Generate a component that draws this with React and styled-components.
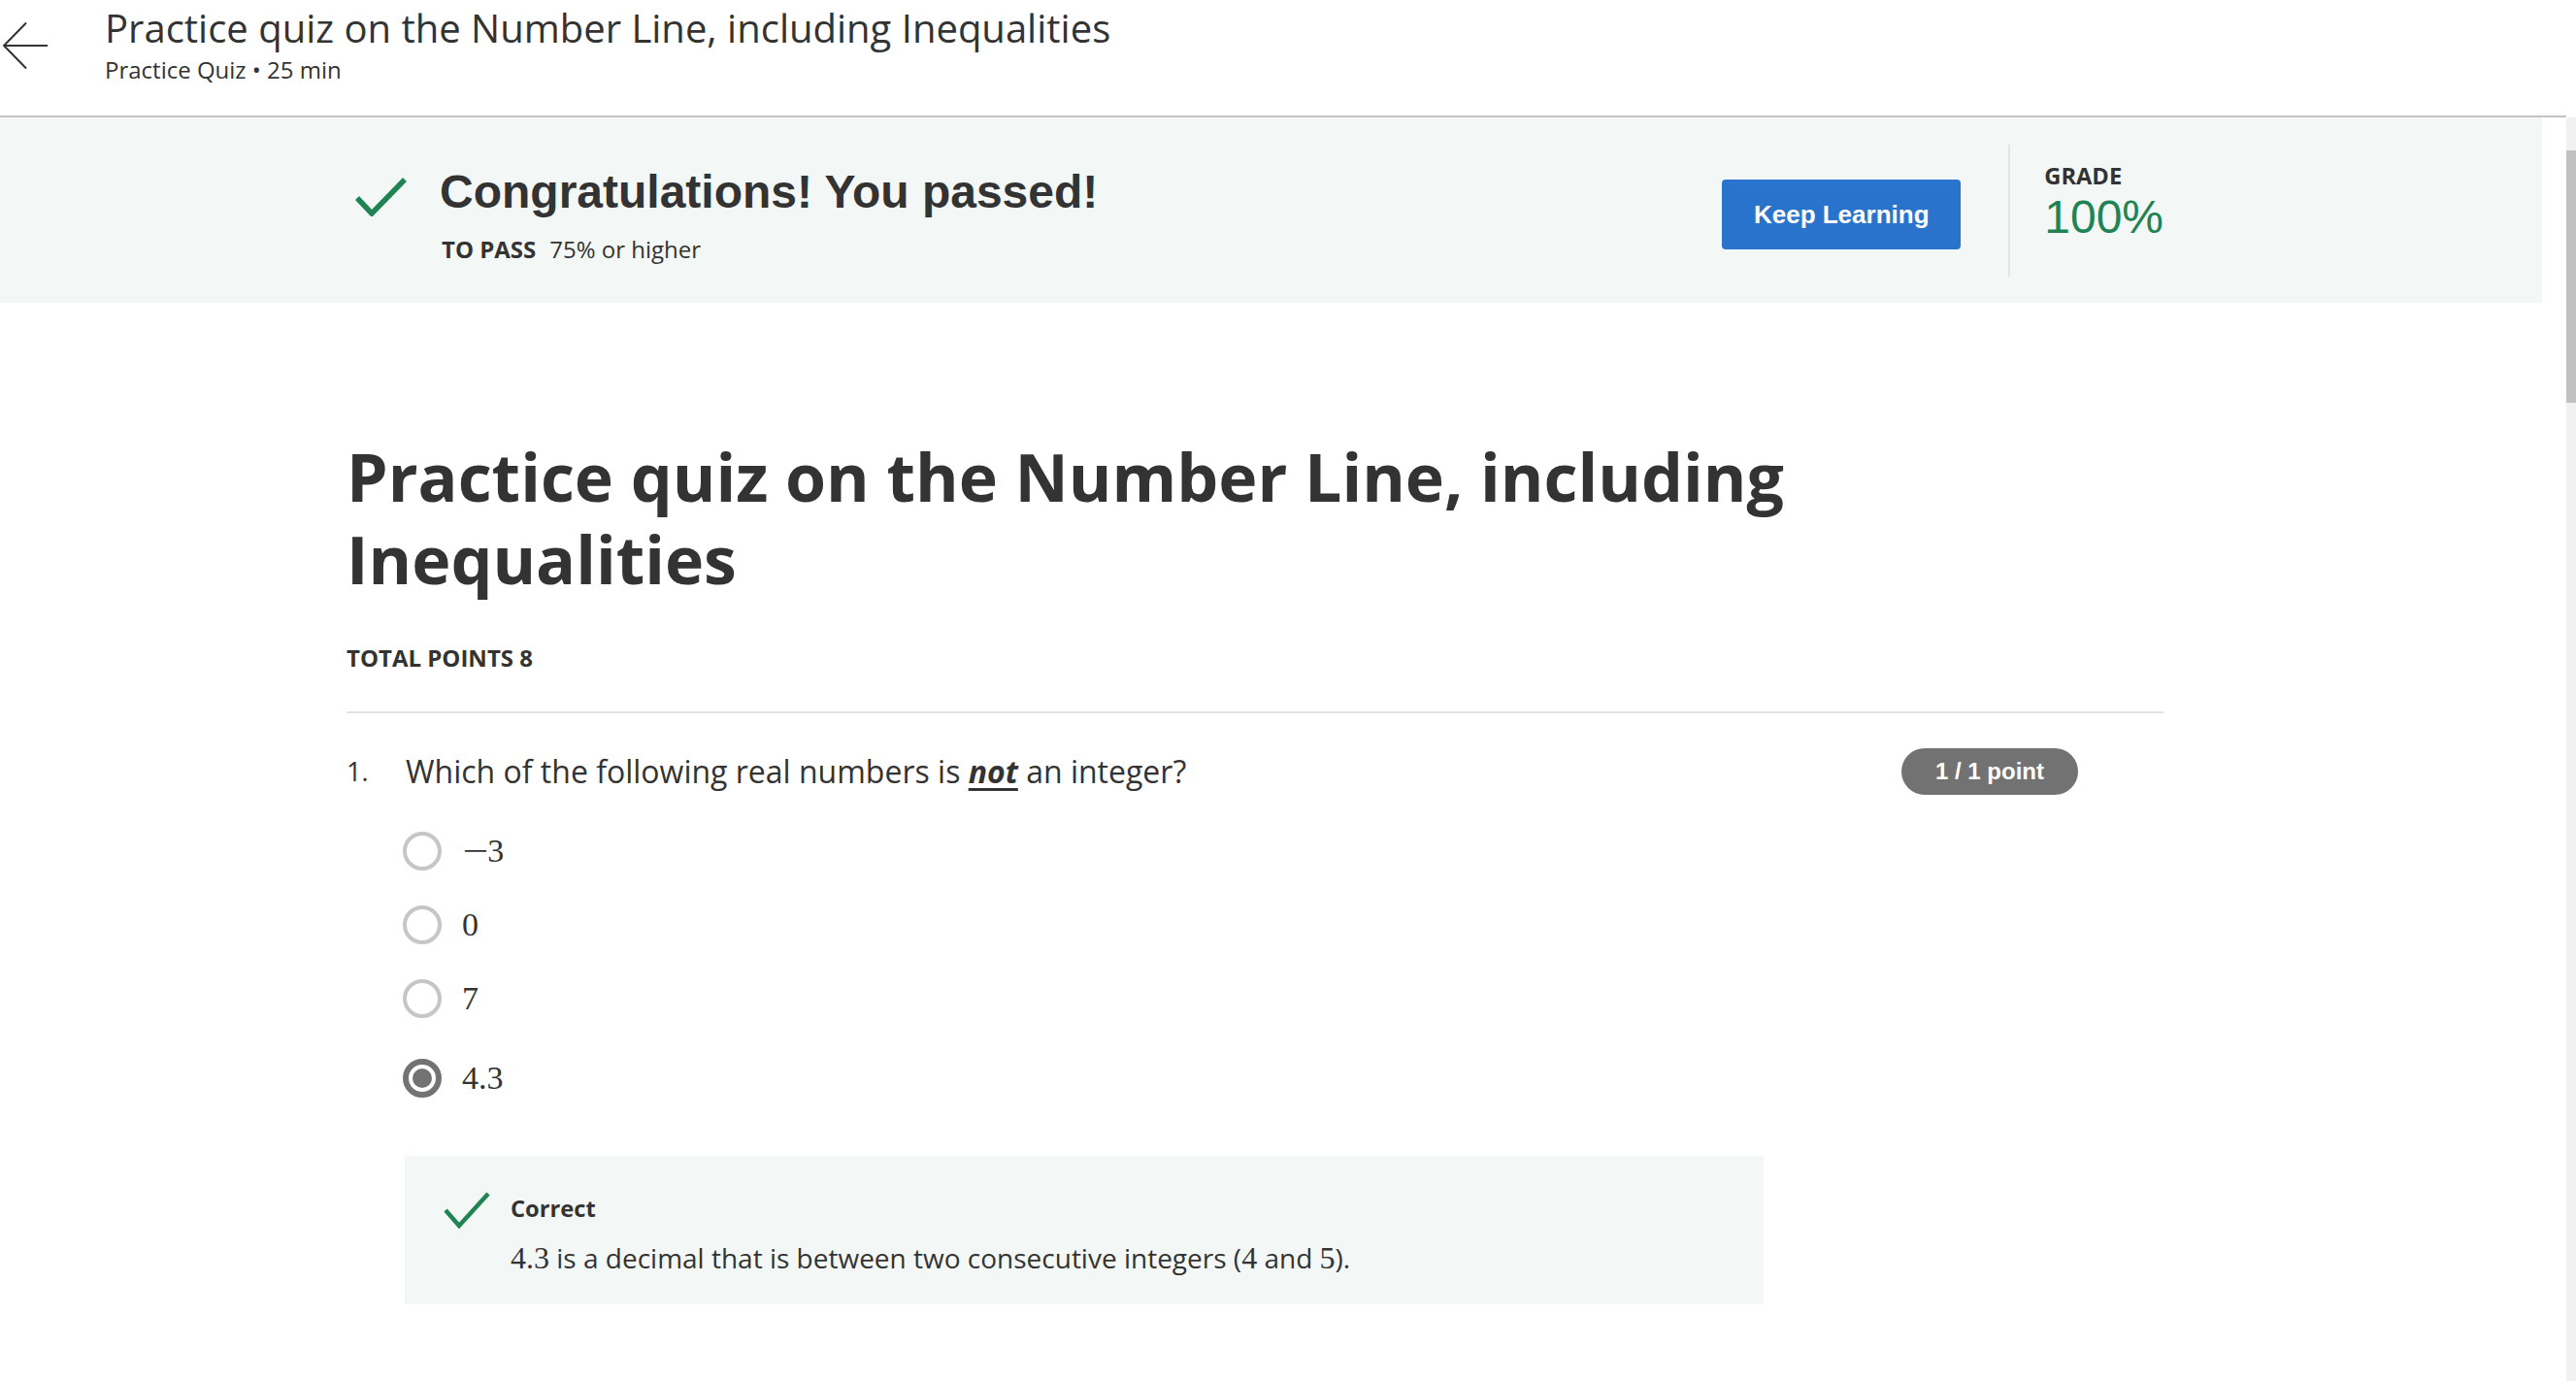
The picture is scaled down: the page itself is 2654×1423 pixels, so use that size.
import React from 'react';
import styled, { createGlobalStyle } from 'styled-components';

const GlobalStyle = createGlobalStyle`
  * { box-sizing: border-box; }
  html, body { margin: 0; padding: 0; height: 100%; overflow: hidden; background: #ffffff; }
  body { font-family: "Open Sans", "Liberation Sans", Arial, sans-serif; color: #333333; }
  #root { height: 100%; }
`;

const Page = styled.div`
  height: 100vh;
  display: flex;
  flex-direction: column;
`;

const TopBar = styled.header`
  flex: none;
  height: 121px;
  margin-right: 10px;
  border-bottom: 2px solid #c4c4c4;
  display: flex;
  align-items: flex-start;
  padding-top: 5px;
  background: #ffffff;
`;

const BackButton = styled.button`
  flex: none;
  width: 108px;
  height: 90px;
  border: 0;
  background: none;
  padding: 17px 0 0 2px;
  display: flex;
  align-items: flex-start;
  cursor: pointer;
`;

const TitleBlock = styled.div`
  display: flex;
  flex-direction: column;
`;

const TopTitle = styled.h1`
  margin: 0;
  font-size: 40px;
  line-height: 48px;
  font-weight: 400;
  color: #333333;
`;

const TopSub = styled.div`
  margin-top: 4px;
  font-size: 24px;
  line-height: 30px;
  color: #333333;
`;

const Body = styled.div`
  flex: 1;
  min-height: 0;
  display: flex;
`;

const Scroller = styled.main`
  flex: 1;
  overflow: hidden;
`;

const ScrollRail = styled.div`
  flex: none;
  width: 10px;
  background: #f1f1f1;
  display: flex;
  flex-direction: column;
`;

const ScrollThumb = styled.div`
  margin-top: 34px;
  height: 260px;
  background: #c1c1c1;
`;

const Banner = styled.section`
  margin-right: 25px;
  height: 191px;
  background: #f3f8f7;
  display: flex;
`;

const Column = styled.div`
  width: 1872px;
  margin-left: 357px;
`;

const BannerRow = styled(Column)`
  display: flex;
  align-items: flex-start;
`;

const PassGroup = styled.div`
  flex: 1;
  margin-top: 48px;
  display: flex;
  align-items: flex-start;
`;

const PassIcon = styled.svg`
  flex: none;
  margin: 14px 0 0 9px;
`;

const PassText = styled.div`
  margin-left: 34px;
  display: flex;
  flex-direction: column;
`;

const Congrats = styled.h2`
  margin: 0;
  font-family: "Liberation Sans", Arial, sans-serif;
  font-size: 48px;
  line-height: 57.6px;
  font-weight: 700;
  color: #333333;
`;

const PassLine = styled.div`
  margin-top: 13px;
  margin-left: 2px;
  font-size: 24px;
  line-height: 33px;
  color: #333333;
`;

const Label = styled.strong`
  font-weight: 700;
  margin-right: 14px;
`;

const KeepButton = styled.button`
  flex: none;
  margin-top: 64px;
  width: 246px;
  height: 72px;
  border: 0;
  border-radius: 4px;
  background: #2a73cc;
  color: #ffffff;
  font-family: "Liberation Sans", Arial, sans-serif;
  font-size: 26px;
  font-weight: 700;
  cursor: pointer;
`;

const VDivider = styled.div`
  flex: none;
  width: 2px;
  height: 136px;
  margin: 28px 35px 0 49px;
  background: #e2e5e4;
`;

const GradeBlock = styled.div`
  flex: none;
  margin-top: 45px;
  display: flex;
  flex-direction: column;
`;

const GradeLabel = styled.div`
  font-size: 23.7px;
  line-height: 30px;
  font-weight: 700;
  color: #333333;
`;

const GradeValue = styled.div`
  font-family: "Liberation Sans", Arial, sans-serif;
  font-size: 48px;
  line-height: 55px;
  color: #1f8354;
`;

const Content = styled(Column)`
  padding-top: 136px;
`;

const QuizTitle = styled.h1`
  margin: 0;
  font-size: 68px;
  line-height: 85px;
  font-weight: 700;
  color: #333333;
  max-width: 1600px;
`;

const TotalPoints = styled.div`
  margin-top: 45px;
  font-size: 24px;
  line-height: 30px;
  font-weight: 700;
  color: #333333;
`;

const Rule = styled.hr`
  margin: 40px 0 0 0;
  border: 0;
  height: 2px;
  background: #e1e1e1;
`;

const Question = styled.div`
  margin-top: 39px;
`;

const QuestionHead = styled.div`
  display: flex;
  align-items: flex-start;
`;

const QNumber = styled.div`
  flex: none;
  width: 61px;
  font-size: 27px;
  line-height: 42px;
  color: #333333;
`;

const QText = styled.div`
  flex: 1;
  font-size: 32px;
  line-height: 42px;
  color: #333333;
`;

const Emph = styled.em`
  font-weight: 700;
  text-decoration: underline;
  text-decoration-thickness: 3px;
  text-underline-offset: 5px;
`;

const PointBadge = styled.div`
  flex: none;
  margin: -3px 88px 0 0;
  height: 48px;
  padding: 0 35px;
  border-radius: 24px;
  background: #727272;
  color: #ffffff;
  font-family: "Liberation Sans", Arial, sans-serif;
  font-size: 24px;
  font-weight: 700;
  display: flex;
  align-items: center;
`;

const Options = styled.div`
  margin-top: 20px;
  padding-left: 58px;
  display: flex;
  flex-direction: column;
`;

const Option = styled.label`
  height: 76px;
  margin-top: ${p => (p.$checked ? '6px' : '0')};
  display: flex;
  align-items: center;
  gap: 21px;
  cursor: pointer;
`;

const Radio = styled.span`
  flex: none;
  width: 40px;
  height: 40px;
  border-radius: 50%;
  border: ${p => (p.$checked ? '6px solid #737373' : '4px solid #c6c6c6')};
  display: flex;
  align-items: center;
  justify-content: center;
  &::after {
    content: '';
    display: ${p => (p.$checked ? 'block' : 'none')};
    width: 20px;
    height: 20px;
    border-radius: 50%;
    background: #737373;
  }
`;

const MathText = styled.span`
  font-family: "Liberation Serif", "Times New Roman", serif;
  font-size: ${p => p.$size || 34}px;
  color: #333333;
`;

const Minus = styled.span`
  display: inline-block;
  margin: 0 3px 0 4px;
  transform: scaleX(1.4);
`;

const Feedback = styled.div`
  margin: 42px 0 0 60px;
  width: 1400px;
  padding: 39px 40px 27px 40px;
  background: #f3f8f7;
  display: flex;
  align-items: flex-start;
`;

const FeedbackIcon = styled.svg`
  flex: none;
  margin-top: -2px;
`;

const FeedbackBody = styled.div`
  margin-left: 21px;
  display: flex;
  flex-direction: column;
`;

const FeedbackTitle = styled.div`
  font-size: 23.7px;
  line-height: 30px;
  font-weight: 700;
  color: #333333;
`;

const FeedbackText = styled.div`
  margin-top: 15px;
  font-size: 28px;
  line-height: 42px;
  color: #333333;
`;

const options = [
  { id: 'a', value: '3', negative: true },
  { id: 'b', value: '0' },
  { id: 'c', value: '7' },
  { id: 'd', value: '4.3', checked: true },
];

export default function App() {
  return (
    <>
      <GlobalStyle />
      <Page>
        <TopBar>
          <BackButton aria-label="Back">
            <svg width="48" height="50" viewBox="0 0 48 50" fill="none" stroke="#333" strokeWidth="2">
              <path d="M47 25 H2" />
              <path d="M25 1.5 L2 25 L25 48.5" />
            </svg>
          </BackButton>
          <TitleBlock>
            <TopTitle>Practice quiz on the Number Line, including Inequalities</TopTitle>
            <TopSub>Practice Quiz • 25 min</TopSub>
          </TitleBlock>
        </TopBar>
        <Body>
          <Scroller>
            <Banner>
              <BannerRow>
                <PassGroup>
                  <PassIcon width="53" height="40" viewBox="0 0 53 40" fill="none" stroke="#1f8354" strokeWidth="5.5">
                    <path d="M2 21 L17 37 L51 2" />
                  </PassIcon>
                  <PassText>
                    <Congrats>Congratulations! You passed!</Congrats>
                    <PassLine>
                      <Label>TO PASS</Label>75% or higher
                    </PassLine>
                  </PassText>
                </PassGroup>
                <KeepButton>Keep Learning</KeepButton>
                <VDivider />
                <GradeBlock>
                  <GradeLabel>GRADE</GradeLabel>
                  <GradeValue>100%</GradeValue>
                </GradeBlock>
              </BannerRow>
            </Banner>
            <Content>
              <QuizTitle>Practice quiz on the Number Line, including Inequalities</QuizTitle>
              <TotalPoints>TOTAL POINTS 8</TotalPoints>
              <Rule />
              <Question>
                <QuestionHead>
                  <QNumber>1.</QNumber>
                  <QText>
                    Which of the following real numbers is <Emph>not</Emph> an integer?
                  </QText>
                  <PointBadge>1 / 1 point</PointBadge>
                </QuestionHead>
                <Options>
                  {options.map(o => (
                    <Option key={o.id} $checked={o.checked}>
                      <Radio $checked={o.checked} />
                      <MathText>
                        {o.negative && <Minus>{'\u2212'}</Minus>}
                        {o.value}
                      </MathText>
                    </Option>
                  ))}
                </Options>
                <Feedback>
                  <FeedbackIcon width="48" height="38" viewBox="0 0 48 38" fill="none" stroke="#1f8354" strokeWidth="4.5">
                    <path d="M2 19 L16 35 L46 2" />
                  </FeedbackIcon>
                  <FeedbackBody>
                    <FeedbackTitle>Correct</FeedbackTitle>
                    <FeedbackText>
                      <MathText $size={32}>4.3</MathText> is a decimal that is between two consecutive integers (<MathText $size={32}>4</MathText> and <MathText $size={32}>5</MathText>).
                    </FeedbackText>
                  </FeedbackBody>
                </Feedback>
              </Question>
            </Content>
          </Scroller>
          <ScrollRail>
            <ScrollThumb />
          </ScrollRail>
        </Body>
      </Page>
    </>
  );
}
